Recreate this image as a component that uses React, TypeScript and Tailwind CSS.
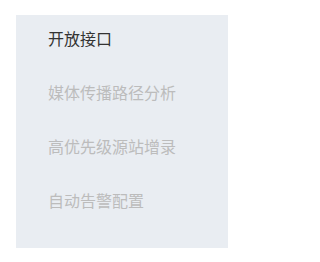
const items = [
  { label: "开放接口", active: true },
  { label: "媒体传播路径分析", active: false },
  { label: "高优先级源站增录", active: false },
  { label: "自动告警配置", active: false },
]

export default function App() {
  return (
    <div className="h-[262px] w-[250px] bg-white pl-[16px] pt-[15px]">
      <div className="flex h-[233px] w-[212px] flex-col gap-[38px] bg-[#e9edf2] pl-[32px] pt-[15px] font-['Noto_Sans_CJK_SC',sans-serif] text-[16px]">
        {items.map((item) => (
          <div
            key={item.label}
            className={`h-[16px] leading-[16px] ${item.active ? "text-[#333333]" : "text-[#bcbcbc]"}`}
          >
            {item.label}
          </div>
        ))}
      </div>
    </div>
  )
}
